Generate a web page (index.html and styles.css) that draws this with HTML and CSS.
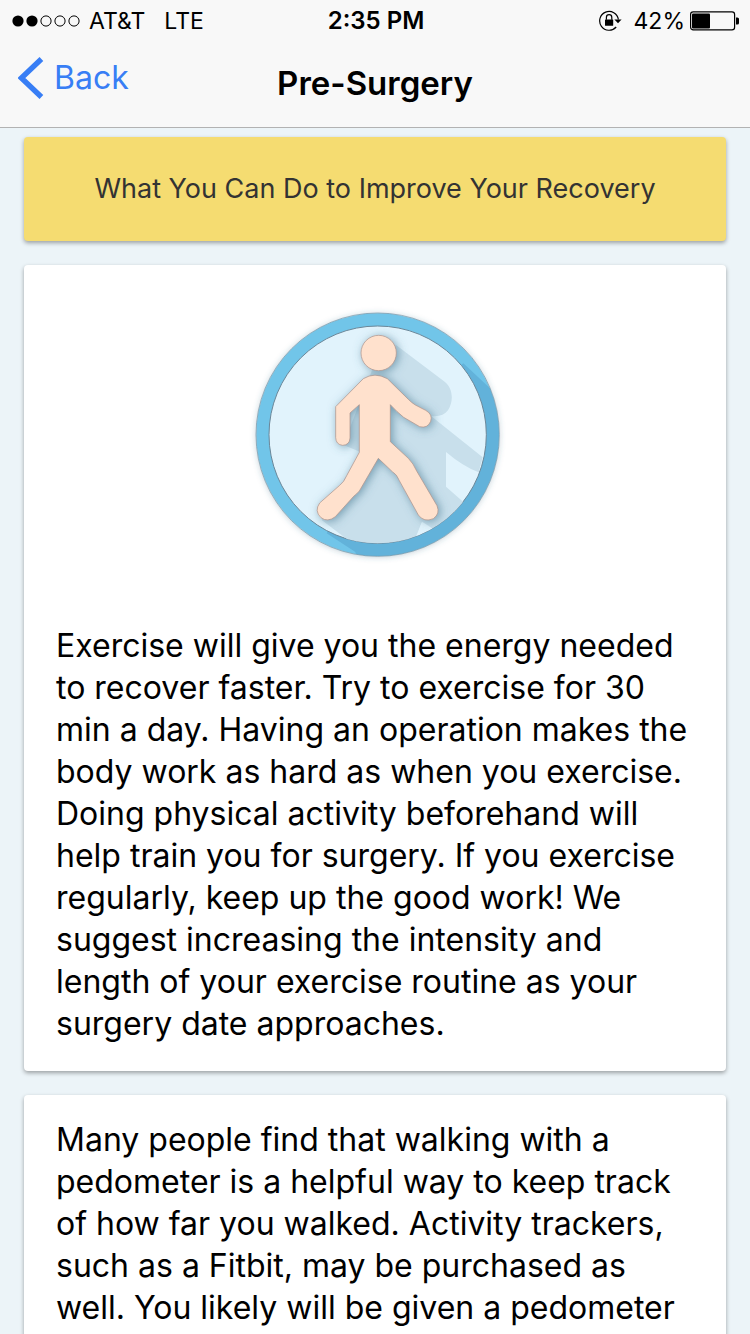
FILE: index.html
```html
<!DOCTYPE html>
<html lang="en">
<head>
<meta charset="utf-8">
<meta name="viewport" content="width=device-width, initial-scale=1">
<title>Pre-Surgery</title>
<link rel="stylesheet" href="styles.css">
</head>
<body>
<div class="screen">
  <header class="top">
    <div class="status">
      <div class="status-left">
        <svg class="signal" viewBox="0 0 68 12" aria-hidden="true">
          <circle cx="6" cy="6" r="5.6"/><circle cx="20" cy="6" r="5.6"/>
          <g fill="none" stroke="#000" stroke-width="1"><circle cx="34" cy="6" r="5.1"/><circle cx="48" cy="6" r="5.1"/><circle cx="62" cy="6" r="5.1"/></g>
        </svg>
        <span class="carrier">AT&amp;T</span>
        <span>LTE</span>
      </div>
      <time class="clock">2:35 PM</time>
      <div class="status-right">
        <svg class="lock" viewBox="0 0 24 22" aria-hidden="true">
          <path d="M20.4 9.5A9.4 9.4 0 1 0 18.2 17" fill="none" stroke="#000" stroke-width="1.2"/>
          <path d="M16.4 9.6h7.2l-3.6 3.6z"/>
          <rect x="7" y="9.4" width="8.2" height="6.4" rx=".6"/>
          <path d="M8.4 9.8V7.4a2.7 2.7 0 0 1 5.4 0v2.4" fill="none" stroke="#000" stroke-width="1.2"/>
        </svg>
        <span>42%</span>
        <svg class="battery" viewBox="0 0 50 20" aria-hidden="true">
          <rect x=".6" y=".9" width="44" height="18" rx="2.6" fill="none" stroke="#000" stroke-width="1.2"/>
          <rect x="2" y="2.4" width="18" height="15" rx="1"/>
          <path d="M46 6.4h1.4q1.6 0 1.6 1.6v4q0 1.6-1.6 1.6H46z"/>
        </svg>
      </div>
    </div>
    <nav class="nav">
      <button class="back" type="button">
        <svg class="chevron" viewBox="0 0 26 42" aria-hidden="true"><path d="M23.4 2 3.4 21 23.4 40" fill="none" stroke="#387ef5" stroke-width="5.4"/></svg>
        <span>Back</span>
      </button>
      <h1 class="title">Pre-Surgery</h1>
    </nav>
  </header>
  <main class="content">
    <section class="card banner"><h2 class="banner-text">What You Can Do to Improve Your Recovery</h2></section>
    <section class="card">
      <svg class="figure" viewBox="0 0 810 810" role="img" aria-label="Walking person">
        <defs>
          <filter id="soft" x="-20%" y="-20%" width="140%" height="140%"><feDropShadow dx="0" dy="2" stdDeviation="10" flood-color="#35627c" flood-opacity=".35"/></filter>
          <filter id="lift" x="-20%" y="-20%" width="140%" height="140%"><feDropShadow dx="6" dy="4" stdDeviation="15" flood-color="#47778f" flood-opacity=".65"/></filter>
          <clipPath id="disc"><circle cx="413" cy="404" r="326"/></clipPath>
          <clipPath id="ring"><circle cx="413" cy="404" r="364"/></clipPath>
        </defs>
        <circle cx="413" cy="404" r="364" fill="#71c5e9" filter="url(#soft)"/>
        <path clip-path="url(#ring)" d="M670 190 750 265H810V810H380L345 755 260 700 413 404Z" fill="#62b2da"/>
        <circle cx="413" cy="404" r="365" fill="none" stroke="#6c8fa3" stroke-width="2"/>
        <circle cx="413" cy="404" r="326" fill="#e1f3fc" stroke="#6b8799" stroke-width="3"/>
        <g clip-path="url(#disc)">
          <path d="M468 135 614 245C640 265 641 305 624 331Q608 352 573 348L728 472 716 517Q670 500 618 456V560L688 622 590 700 545 668 520 740H350L245 660 360 455 310 435 400 200Z" fill="#c8dfeb"/>
          <path d="M525 718 546 665Q570 679 582 690Z" fill="#e1f3fc"/>
          <g fill="#ffe1cd" stroke="#a78f88" stroke-width="2" filter="url(#lift)">
            <circle cx="416" cy="159" r="53"/>
            <path d="M370 236Q404 215 442 236L506 299Q515 308 526 315L557 331Q579 343 572 364 563 386 539 380L491 352Q470 335 451 314V425L505 475Q520 490 530 513L591 617Q601 641 580 656 552 668 535 645L478 542Q470 522 458 516L415 475 358 573Q350 582 341 589L286 650Q263 668 243 653 222 633 239 609L299 556Q312 546 320 527L358 457V314L330 339V414Q329 435 308 436 288 434 287 413V320Z"/>
          </g>
        </g>
      </svg>
      <p class="text">Exercise will give you the energy needed to recover faster. Try to exercise for 30 min a day. Having an operation makes the body work as hard as when you exercise. Doing physical activity beforehand will help train you for surgery. If you exercise regularly, keep up the good work! We suggest increasing the intensity and length of your exercise routine as your surgery date approaches.</p>
    </section>
    <section class="card">
      <p class="text">Many people find that walking with a pedometer is a helpful way to keep track of how far you walked. Activity trackers, such as a Fitbit, may be purchased as well. You likely will be given a pedometer</p>
    </section>
  </main>
</div>
</body>
</html>
```
FILE: styles.css
```css
* { box-sizing: border-box; }
body {
  margin: 0;
  background: #ecf4f8;
  color: #000;
  font-family: Inter, "Liberation Sans", sans-serif;
}
.screen { display: flex; flex-direction: column; height: 100vh; }
.top {
  flex: none;
  background: #f8f8f8;
  border-bottom: 1px solid #b2b2b2;
}
.status {
  display: grid;
  grid-template-columns: 1fr auto 1fr;
  align-items: center;
  height: 41px;
  padding: 0 10px 0 12px;
  font-size: 23px;
}
.status-left, .status-right { display: flex; align-items: center; }
.status-right { justify-content: flex-end; }
.signal { width: 68px; height: 12px; margin-right: 9px; }
.carrier { margin-right: 19px; }
.clock { font-size: 24px; font-weight: 600; }
.lock { width: 24px; height: 22px; margin-right: 12px; }
.battery { width: 50px; height: 20px; margin-left: 5px; }
.nav {
  display: grid;
  grid-template-columns: 1fr auto 1fr;
  align-items: center;
  height: 86px;
  padding: 0 18px 2px;
}
.back {
  display: flex;
  align-items: center;
  gap: 10px;
  padding: 0 0 10px;
  border: 0;
  background: none;
  color: #387ef5;
  font: 32px/42px Inter, "Liberation Sans", sans-serif;
}
.chevron { width: 26px; height: 42px; }
.title { margin: 0; font-size: 33px; font-weight: 600; line-height: 42px; }
.content { flex: 1; min-height: 0; overflow-y: auto; scrollbar-width: none; padding: 9px 24px 24px; }
.card {
  margin-bottom: 24px;
  padding: 24px 32px 26px;
  border-radius: 4px;
  background: #fff;
  box-shadow: 0 2px 4px rgba(0, 0, 0, .35);
}
.banner { padding: 32px 24px; background: #f5dc71; text-align: center; }
.banner-text { margin: 0; color: #333; font-size: 27px; font-weight: 400; line-height: 40px; }
.figure { display: block; width: 270px; height: 270px; margin: 11px auto 55px; }
.text { margin: 0; font-size: 32px; line-height: 42px; }
```
